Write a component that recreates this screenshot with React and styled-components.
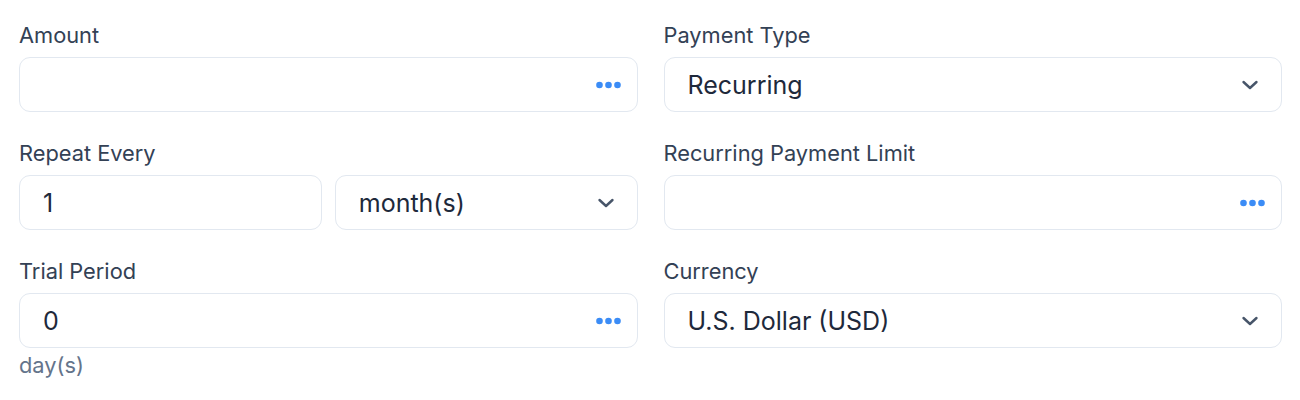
import React from 'react'
import styled, { createGlobalStyle } from 'styled-components'

const GlobalStyle = createGlobalStyle`
  body {
    margin: 0;
    background: #ffffff;
    font-family: Inter, "Liberation Sans", sans-serif;
  }
`

const Form = styled.div`
  display: grid;
  grid-template-columns: 1fr 1fr;
  column-gap: 26px;
  row-gap: 28px;
  padding: 22px 18px 0 19px;
`

const Field = styled.div`
  display: flex;
  flex-direction: column;
`

const Label = styled.label`
  font-size: 21.8px;
  line-height: 26px;
  color: #334155;
  margin-bottom: 9px;
`

const Pair = styled.div`
  display: grid;
  grid-template-columns: 1fr 1fr;
  gap: 13px;
`

const Box = styled.div`
  display: flex;
  align-items: center;
  height: 55px;
  box-sizing: border-box;
  border: 1px solid #e2e8f0;
  border-radius: 11px;
  background: #fff;
  padding: 0 ${(p) => (p.$select ? 22 : 16)}px 0 23px;
  font-size: 25px;
  color: #1e293b;
`

const Value = styled.span`
  flex: 1;
`

const Hint = styled.div`
  margin-top: 4px;
  font-size: 21.8px;
  line-height: 26px;
  color: #64748b;
`

const Dots = () => (
  <svg width="25" height="8" viewBox="0 0 25 8">
    <circle cx="3.5" cy="4" r="3.3" fill="#3b8cf6" />
    <circle cx="12.5" cy="4" r="3.3" fill="#3b8cf6" />
    <circle cx="21.5" cy="4" r="3.3" fill="#3b8cf6" />
  </svg>
)

const Chevron = () => (
  <svg width="18" height="12" viewBox="0 0 18 12">
    <path d="M2.5 3 L9 9 L15.5 3" fill="none" stroke="#475569" strokeWidth="2.4" strokeLinecap="round" strokeLinejoin="round" />
  </svg>
)

function Input({ value, dots }) {
  return (
    <Box>
      <Value>{value}</Value>
      {dots && <Dots />}
    </Box>
  )
}

function Select({ value }) {
  return (
    <Box $select>
      <Value>{value}</Value>
      <Chevron />
    </Box>
  )
}

export default function App() {
  return (
    <>
      <GlobalStyle />
      <Form>
        <Field>
          <Label>Amount</Label>
          <Input value="" dots />
        </Field>
        <Field>
          <Label>Payment Type</Label>
          <Select value="Recurring" />
        </Field>
        <Field>
          <Label>Repeat Every</Label>
          <Pair>
            <Input value="1" />
            <Select value="month(s)" />
          </Pair>
        </Field>
        <Field>
          <Label>Recurring Payment Limit</Label>
          <Input value="" dots />
        </Field>
        <Field>
          <Label>Trial Period</Label>
          <Input value="0" dots />
          <Hint>day(s)</Hint>
        </Field>
        <Field>
          <Label>Currency</Label>
          <Select value="U.S. Dollar (USD)" />
        </Field>
      </Form>
    </>
  )
}
